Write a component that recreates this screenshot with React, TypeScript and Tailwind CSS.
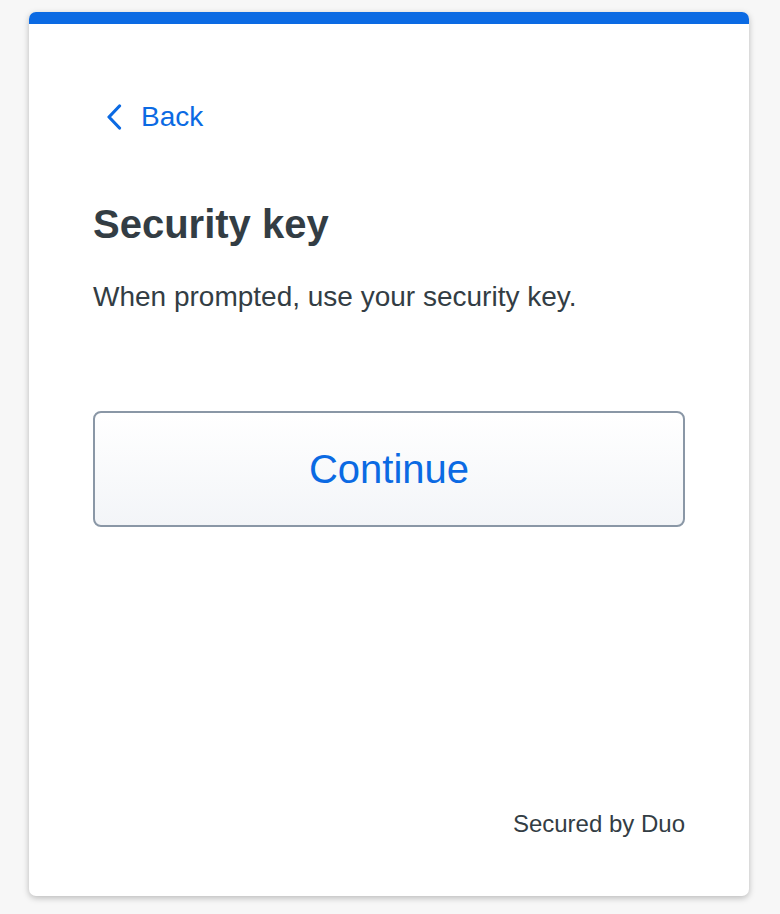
import React from "react";

export default function App() {
  return (
    <div className="min-h-[914px] w-full bg-[#f7f7f7] pt-[12px] pl-[29px]" style={{ fontFamily: '"Liberation Sans", Arial, sans-serif' }}>
      <div className="w-[720px] h-[884px] bg-white rounded-[7px] overflow-hidden shadow-[0_2px_6px_rgba(0,0,0,0.25)] flex flex-col">
        <div className="h-[12px] bg-[#0b6ae3] shrink-0" />
        <div className="flex flex-col flex-1 px-[64px]">
          <button className="mt-[73px] flex items-center gap-[19px] text-[#0b6ae3] text-[28px] leading-[40px] self-start pl-[13px]">
            <svg width="16" height="26" viewBox="0 0 16 26" fill="none">
              <path d="M13.5 2 L3 13 L13.5 24" stroke="#0b6ae3" strokeWidth="3.2" strokeLinecap="round" strokeLinejoin="round" />
            </svg>
            <span>Back</span>
          </button>
          <h1 className="mt-[63px] text-[40px] leading-[48px] font-bold text-[#333d44]">Security key</h1>
          <p className="mt-[31px] text-[28px] leading-[36px] text-[#333d44]">When prompted, use your security key.</p>
          <button className="mt-[96px] w-full h-[116px] rounded-[8px] border-2 border-[#8a97a6] bg-gradient-to-b from-white to-[#f3f5f8] text-[#0b6ae3] text-[40px] leading-[48px]">
            Continue
          </button>
          <div className="mt-auto mb-[56px] text-right text-[24px] leading-[32px] text-[#333d44]">Secured by Duo</div>
        </div>
      </div>
    </div>
  );
}
